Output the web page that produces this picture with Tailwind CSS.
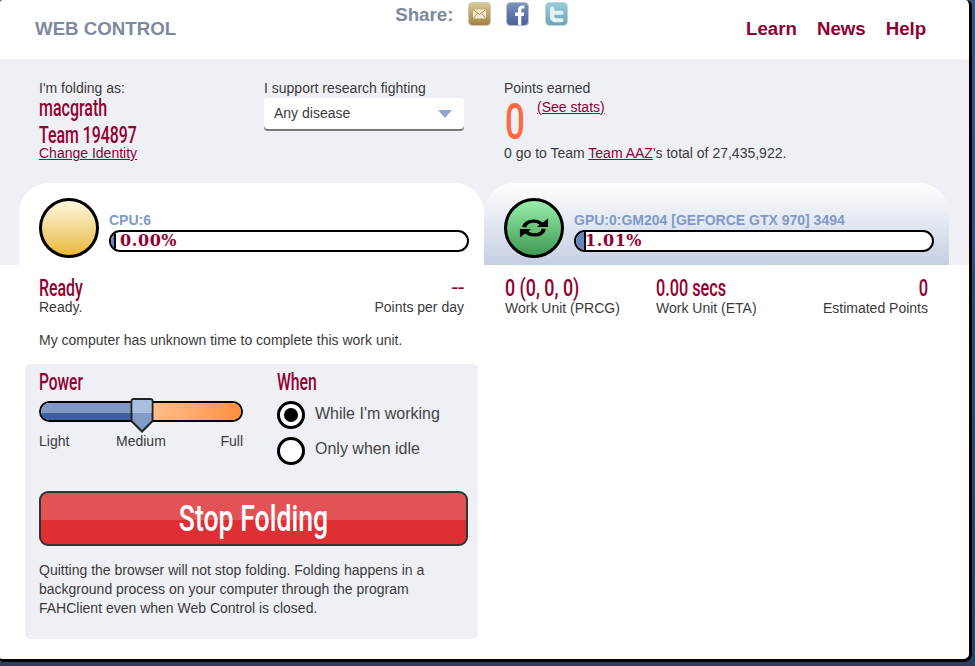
<!DOCTYPE html>
<html lang="en">
<head>
    <meta charset="UTF-8">
    <title>Web Control</title>
    <script src="https://cdn.jsdelivr.net/npm/@tailwindcss/browser@4"></script>
</head>
<body class="bg-[#34496e] font-['Liberation_Sans',Arial,sans-serif] text-[14px] text-[#3a3a3a]">
<div class="w-[975px] h-[666px] overflow-hidden bg-gradient-to-b from-[#3b5480] to-[#2c3f60]">
    <div class="w-[972px] h-[662px] bg-white border-r-[3px] border-b-[3px] border-black rounded-tr-[6px] rounded-br-[8px] rounded-tl-[3px] rounded-bl-[4px] overflow-hidden">

        <!-- Header -->
        <header class="h-[59px] flex relative">
            <div class="ml-[35px] mt-[18px] font-bold text-[18.7px] leading-[21px] text-[#7d899f]">WEB CONTROL</div>
            <div class="ml-[219px] mt-[4px] flex items-start">
                <span class="font-bold text-[18.7px] leading-[21px] text-[#7d899f] mr-[15px]">Share:</span>
                <svg class="w-[23px] h-[24px] mr-[15px] -mt-[2px]" viewBox="0 0 23 24">
                    <defs><linearGradient id="mailBg" x1="0" y1="0" x2="0" y2="1"><stop offset="0" stop-color="#d9c79a"/><stop offset="1" stop-color="#a3813f"/></linearGradient></defs>
                    <rect x="0.5" y="0.5" width="22" height="23" rx="4" fill="url(#mailBg)" stroke="#c9c9c0"/>
                    <rect x="5" y="7.5" width="13" height="9" fill="#f3ead2"/>
                    <path d="M5 7.500l6.500 5 6.500-5M5 16.500l4.500-5M18 16.500l-4.500-5" fill="none" stroke="#a88a4c" stroke-width="1"/>
                </svg>
                <svg class="w-[23px] h-[24px] mr-[16px] -mt-[2px]" viewBox="0 0 23 24">
                    <defs><linearGradient id="fbBg" x1="0" y1="0" x2="0" y2="1"><stop offset="0" stop-color="#7f93bd"/><stop offset="0.5" stop-color="#5f78a8"/><stop offset="1" stop-color="#4a6297"/></linearGradient></defs>
                    <rect x="0.5" y="0.5" width="22" height="23" rx="4" fill="url(#fbBg)" stroke="#b7bfd0"/>
                    <path d="M12 23V14H9v-3.500h3V8c0-3 1.800-4.500 4.300-4.500 1 0 1.700.1 2 .1v3h-1.500c-1.200 0-1.500.6-1.500 1.500v2.400h3l-.4 3.500h-2.600v9z" fill="#fff"/>
                </svg>
                <svg class="w-[23px] h-[24px] -mt-[2px]" viewBox="0 0 23 24">
                    <defs><linearGradient id="twBg" x1="0" y1="0" x2="0" y2="1"><stop offset="0" stop-color="#9ccdd8"/><stop offset="1" stop-color="#6aa5b6"/></linearGradient></defs>
                    <rect x="0.5" y="0.5" width="22" height="23" rx="4" fill="url(#twBg)" stroke="#bcd5da"/>
                    <path d="M7 4.500c1.300 0 2.300.8 2.300 2v2.300h7.200c1.200 0 2 .9 2 2s-.8 2-2 2H9.300v1.200c0 1.500.9 2.200 2.300 2.200h4.900c1.200 0 2 .9 2 2s-.8 2-2 2h-5.200c-3.800 0-6.300-2.300-6.300-5.800V6.500c0-1.200.8-2 2-2z" fill="#e4f2f5"/>
                </svg>
            </div>
            <nav class="absolute left-[746px] top-[18px] flex gap-[20px] font-bold text-[18.7px] leading-[21px] text-[#900030]">
                <a>Learn</a><a>News</a><a>Help</a>
            </nav>
        </header>

        <!-- Identity and tabs -->
        <section class="h-[206px] bg-[#eff0f5] flex flex-col">
            <div class="h-[124px] flex pt-[21px] pl-[39px]">
                <div class="w-[225px]">
                    <div class="leading-[16px]">I'm folding as:</div>
                    <div class="font-['Roboto',sans-serif] font-medium text-[#900030] text-[23.5px] leading-[27px] -mt-[1px] whitespace-nowrap origin-left scale-x-[.68]">macgrath</div>
                    <div class="font-['Roboto',sans-serif] font-medium text-[#900030] text-[23.5px] leading-[26px] whitespace-nowrap origin-left scale-x-[.675]">Team 194897</div>
                    <a class="block text-[#900030] underline leading-[16px] -mt-[3px]">Change Identity</a>
                </div>
                <div class="w-[240px]">
                    <div class="leading-[16px]">I support research fighting</div>
                    <div class="mt-[2px] w-[200px] h-[31px] bg-white rounded-[4px] shadow-[0_2px_0_#777] flex items-center justify-between pl-[10px] pr-[12px]">
                        <span>Any disease</span>
                        <span class="w-0 h-0 border-x-[7px] border-x-transparent border-t-[8px] border-t-[#8fa6cf]"></span>
                    </div>
                </div>
                <div>
                    <div class="leading-[16px]">Points earned</div>
                    <div class="flex h-[48px]">
                        <span class="font-['Roboto',sans-serif] font-medium text-[#ff6a3d] text-[50px] leading-[52px] w-[32px] ml-[1px] origin-left scale-x-[.7]">0</span>
                        <a class="text-[#900030] underline leading-[16px] mt-[3px]">(See stats)</a>
                    </div>
                    <div class="leading-[16px] mt-[1px]">0 go to Team <a class="text-[#900030] underline">Team AAZ</a>'s total of 27,435,922.</div>
                </div>
            </div>
            <div class="h-[82px] flex ml-[19px]">
                <div class="w-[465px] rounded-t-[30px] bg-white flex pl-[20px] pt-[15px]">
                    <div class="w-[60px] h-[60px] rounded-full border-[3px] border-black bg-gradient-to-b from-[#fdf6dc] to-[#e9b92c] shrink-0"></div>
                    <div class="ml-[10px] w-[360px]">
                        <div class="font-bold text-[#7f9ac8] leading-[16px] mt-[14px]">CPU:6</div>
                        <div class="mt-[2px] h-[22px] rounded-full border-[2px] border-black bg-white overflow-hidden flex relative">
                            <div class="w-[5px] bg-[#6485bd] border-r-[2px] border-black"></div>
                            <span class="absolute left-[9px] top-0 font-['DejaVu_Serif',serif] font-bold text-[#900030] text-[16px] tracking-[.6px] leading-[18px]">0.00%</span>
                        </div>
                    </div>
                </div>
                <div class="w-[465px] rounded-t-[30px] bg-gradient-to-b from-white to-[#c5cfe3] flex pl-[20px] pt-[15px]">
                    <div class="w-[60px] h-[60px] rounded-full border-[3px] border-black bg-gradient-to-b from-[#97efa8] to-[#3f9a55] shrink-0 flex items-center justify-center">
                        <svg class="w-[30px] h-[22px]" viewBox="0 0 32 30" preserveAspectRatio="none" fill="none">
                            <path d="M5.500 14C6.500 8 11 5.500 16 5.500c3.500 0 6 1.500 8 4" stroke="#000" stroke-width="4.500"/>
                            <path d="M19 13.500h12V2z" fill="#000"/>
                            <path d="M26.500 16c-1 6-5.500 8.500-10.500 8.500-3.500 0-6-1.500-8-4" stroke="#000" stroke-width="4.500"/>
                            <path d="M13 16.500H1V28z" fill="#000"/>
                        </svg>
                    </div>
                    <div class="ml-[10px] w-[360px]">
                        <div class="font-bold text-[#7f9ac8] leading-[16px] mt-[14px]">GPU:0:GM204 [GEFORCE GTX 970] 3494</div>
                        <div class="mt-[2px] h-[22px] rounded-full border-[2px] border-black bg-white overflow-hidden flex relative">
                            <div class="w-[10px] bg-[#6485bd] border-r-[2px] border-black"></div>
                            <span class="absolute left-[9px] top-0 font-['DejaVu_Serif',serif] font-bold text-[#900030] text-[16px] tracking-[.6px] leading-[18px]">1.01%</span>
                        </div>
                    </div>
                </div>
            </div>
        </section>

        <!-- Slots -->
        <div class="flex">
            <div class="w-[484px] pl-[25px] shrink-0">
                <div class="w-[425px] ml-[14px] mt-[11px] flex justify-between">
                    <div>
                        <div class="font-['Roboto',sans-serif] font-medium text-[#900030] text-[23.5px] leading-[24px] origin-left scale-x-[.675]">Ready</div>
                        <div class="leading-[14px]">Ready.</div>
                    </div>
                    <div class="text-right">
                        <div class="font-['Roboto',sans-serif] text-[#900030] text-[22px] leading-[24px]">--</div>
                        <div class="leading-[14px]">Points per day</div>
                    </div>
                </div>
                <p class="ml-[14px] mt-[18px] leading-[16px]">My computer has unknown time to complete this work unit.</p>

                <!-- Controls -->
                <div class="w-[453px] h-[275px] mt-[16px] bg-[#eff0f5] rounded-[5px] px-[14px] pt-[5px]">
                    <div class="flex">
                        <div class="w-[238px]">
                            <div class="font-['Roboto',sans-serif] font-medium text-[#900030] text-[23.5px] leading-[26px] origin-left scale-x-[.66]">Power</div>
                            <div class="relative w-[204px] h-[21px] mt-[6px] rounded-full border-[2px] border-black overflow-hidden flex">
                                <div class="w-[92px] bg-[linear-gradient(#8098c6_0%,#8098c6_60%,#3d5f9e_60%)]"></div>
                                <div class="flex-1 bg-gradient-to-r from-[#ffc79a] to-[#ff8f3f]"></div>
                            </div>
                            <svg class="absolute left-[129px] top-[398px] w-[26px] h-[36px]" viewBox="0 0 26 36">
                                <path d="M2.500 3a2 2 0 0 1 2-2h17a2 2 0 0 1 2 2v20L13 33.500 2.500 23z" fill="#839cc6" stroke="#222" stroke-width="2"/>
                                <path d="M3.500 3a1 1 0 0 1 1-1h17a1 1 0 0 1 1 1v12h-19z" fill="#a9bfe0"/>
                            </svg>
                            <div class="w-[204px] flex justify-between mt-[11px] leading-[16px]">
                                <span>Light</span><span class="relative -left-[4px]">Medium</span><span>Full</span>
                            </div>
                        </div>
                        <div>
                            <div class="font-['Roboto',sans-serif] font-medium text-[#900030] text-[23.5px] leading-[26px] origin-left scale-x-[.67]">When</div>
                            <div class="flex items-center mt-[6px] text-[16px] text-[#444]">
                                <span class="w-[28px] h-[28px] rounded-full border-[3px] border-black bg-white flex items-center justify-center mr-[10px]"><span class="w-[14px] h-[14px] rounded-full bg-black"></span></span>
                                <span class="-mt-[2px]">While I'm working</span>
                            </div>
                            <div class="flex items-center mt-[8px] text-[16px] text-[#444]">
                                <span class="w-[28px] h-[28px] rounded-full border-[3px] border-black bg-white mr-[10px]"></span>
                                <span class="-mt-[4px]">Only when idle</span>
                            </div>
                        </div>
                    </div>
                    <button class="block w-[429px] h-[55px] mt-[26px] rounded-[9px] border-[2px] border-[#333] bg-[linear-gradient(#e25358_0%,#e25358_53%,#dd2f34_53%)] text-white text-center">
                        <span class="block font-['Roboto',sans-serif] font-medium text-[36px] leading-[50px] scale-x-[.74]">Stop Folding</span>
                    </button>
                    <p class="mt-[15px] leading-[19px]">Quitting the browser will not stop folding. Folding happens in a background process on your computer through the program FAHClient even when Web Control is closed.</p>
                </div>
            </div>
            <div class="flex-1 flex mt-[11px] pl-[21px] pr-[41px]">
                <div class="w-[151px]">
                    <div class="font-['Roboto',sans-serif] font-medium text-[#900030] text-[23.5px] leading-[24px] whitespace-nowrap origin-left scale-x-[.76]">0 (0, 0, 0)</div>
                    <div class="leading-[16px]">Work Unit (PRCG)</div>
                </div>
                <div>
                    <div class="font-['Roboto',sans-serif] font-medium text-[#900030] text-[23.5px] leading-[24px] whitespace-nowrap origin-left scale-x-[.69]">0.00 secs</div>
                    <div class="leading-[16px]">Work Unit (ETA)</div>
                </div>
                <div class="ml-auto text-right">
                    <div class="font-['Roboto',sans-serif] font-medium text-[#900030] text-[23.5px] leading-[24px] origin-right scale-x-[.7]">0</div>
                    <div class="leading-[16px]">Estimated Points</div>
                </div>
            </div>
        </div>
    </div>
</div>
</body>
</html>
